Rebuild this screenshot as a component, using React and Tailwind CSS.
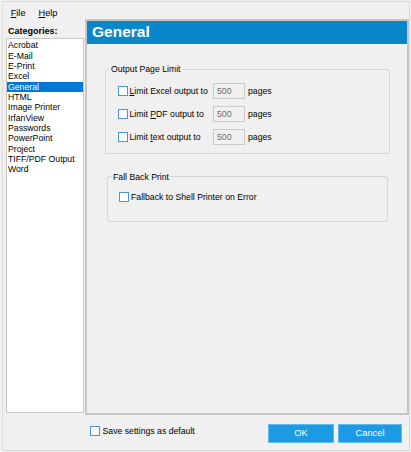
import React from 'react';

const categories = [
  'Acrobat',
  'E-Mail',
  'E-Print',
  'Excel',
  'General',
  'HTML',
  'Image Printer',
  'IrfanView',
  'Passwords',
  'PowerPoint',
  'Project',
  'TIFF/PDF Output',
  'Word',
];

const Check = () => (
  <span className="block w-[10px] h-[10px] shrink-0 border-[1.5px] border-[#4a96dc] bg-white" />
);

const LimitRow = ({ children }) => (
  <div className="flex items-center h-[16px]">
    <Check />
    <span className="w-[85px] pl-[1.5px] whitespace-nowrap">{children}</span>
    <span className="block w-[32px] h-[16px] border border-[#cacaca] bg-[#f0f0f0] pl-[3px] leading-[14px] text-[#6d6d6d]">
      500
    </span>
    <span className="ml-[3px]">pages</span>
  </div>
);

export default function App() {
  const selected = 'General';

  return (
    <div className="w-[411px] h-[452px] bg-[#f0f0f0] pt-[1px] pl-[2px] pr-[1px] pb-[1px] font-['Liberation_Sans',Arial,sans-serif] text-[8.7px] leading-[10.33px] text-black">
      <div className="h-full border border-[#dcdcdc] flex flex-col">
        {/* menu */}
        <div className="h-[17px] shrink-0 flex pl-[7.7px] pt-[6px] text-[9.2px] leading-[10px]">
          <span>
            <u>F</u>ile
          </span>
          <span className="ml-[13px]">
            <u>H</u>elp
          </span>
        </div>

        {/* main */}
        <div className="h-[396px] shrink-0 flex">
          <div className="pl-[3px] flex flex-col">
            <div className="h-[19px] pt-[7px] pl-[2px] font-bold text-[9px] leading-[10px]">Categories:</div>
            <div className="w-[78px] h-[375px] border border-[#c8c8c8] bg-white pt-[1.4px]">
              {categories.map((c) => (
                <div
                  key={c}
                  className={
                    c === selected
                      ? 'h-[10.33px] pl-[1px] whitespace-nowrap bg-[#0078d7] text-white'
                      : 'h-[10.33px] pl-[1px] whitespace-nowrap'
                  }
                >
                  {c}
                </div>
              ))}
            </div>
          </div>

          <div className="ml-[1px] w-[324px] h-full border-2 border-[#c6c6c6] flex flex-col">
            <div className="h-[23px] shrink-0 bg-[#0987cb] text-white font-bold text-[15.5px] leading-[21px] pl-[5px]">
              General
            </div>

            <fieldset className="mt-[20px] ml-[18px] w-[285px] border border-[#d5d5d5] rounded-[3px]">
              <legend className="ml-[3px] px-[2px] leading-[10px]">Output Page Limit</legend>
              <div className="pl-[12px] pt-[9px] pb-[8px] flex flex-col gap-[7px]">
                <LimitRow>
                  <u>L</u>imit Excel output to
                </LimitRow>
                <LimitRow>
                  Limit <u>P</u>DF output to
                </LimitRow>
                <LimitRow>
                  Limit <u>t</u>ext output to
                </LimitRow>
              </div>
            </fieldset>

            <fieldset className="mt-[17.5px] ml-[20px] w-[281px] border border-[#d5d5d5] rounded-[3px]">
              <legend className="ml-[4px] px-[1px] leading-[10px]">Fall Back Print</legend>
              <div className="pl-[11px] pt-[10.5px] pb-[19px]">
                <div className="flex items-center h-[10px]">
                  <Check />
                  <span className="ml-[2px] whitespace-nowrap">Fallback to Shell Printer on Error</span>
                </div>
              </div>
            </fieldset>
          </div>
        </div>

        {/* bottom bar */}
        <div className="flex-1 flex items-start pl-[87px] pr-[7px]">
          <div className="mt-[11px] h-[10px] flex items-center">
            <Check />
            <span className="ml-[2.5px] whitespace-nowrap">Save settings as default</span>
          </div>
          <div className="ml-auto mt-[9px] flex gap-[4px]">
            <button className="w-[66px] h-[19px] border border-[#62baef] bg-[#1c9ae4] text-white text-[9.3px] leading-[17px]">
              OK
            </button>
            <button className="w-[64px] h-[19px] border border-[#62baef] bg-[#1c9ae4] text-white text-[9.3px] leading-[17px]">
              Cancel
            </button>
          </div>
        </div>
      </div>
    </div>
  );
}
